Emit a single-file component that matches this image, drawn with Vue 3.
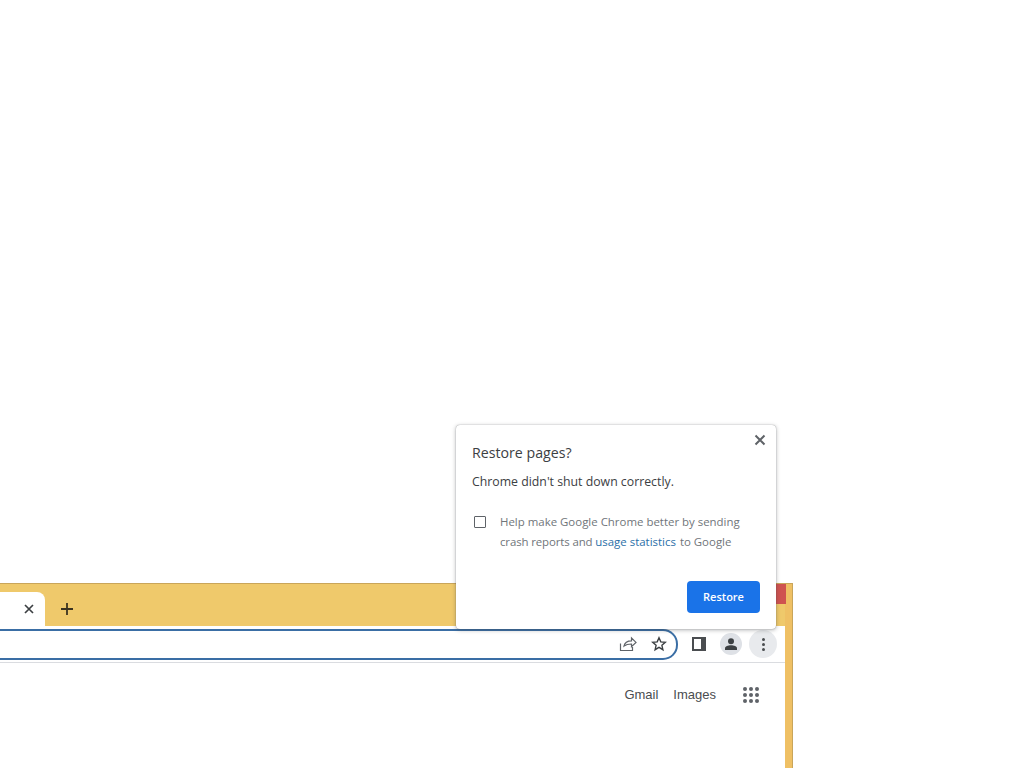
<template>
  <div class="desktop">
    <div class="window">
      <div class="tabstrip">
        <div class="tab">
          <svg class="tab-close" width="12" height="12" viewBox="0 0 12 12"><path d="M2 2l8 8M10 2l-8 8" stroke="#3c4043" stroke-width="1.7" fill="none"/></svg>
        </div>
        <svg class="new-tab" width="14" height="14" viewBox="0 0 14 14"><path d="M7 1v12M1 7h12" stroke="#3b3320" stroke-width="1.8" fill="none"/></svg>
        <div class="win-close"></div>
      </div>
      <div class="toolbar">
        <div class="omnibox">
          <svg class="share" width="18" height="16" viewBox="0 0 18 16"><path d="M1.500 7.500v7h12V11M5 10c.6-3.300 3.400-5.200 7.500-5.200V2l4.500 4.400-4.500 4.300V8C9.500 8 7 8.500 5 10z" stroke="#5f6368" stroke-width="1.200" fill="none"/></svg>
          <svg class="star" width="16" height="16" viewBox="0 0 16 16"><path d="M8 1.800l1.800 4.100 4.500.4-3.400 3 1 4.400L8 11.400l-3.900 2.300 1-4.400-3.400-3 4.500-.4z" stroke="#3c4043" stroke-width="1.400" fill="none"/></svg>
        </div>
        <div class="side-panel"><span></span></div>
        <div class="avatar">
          <svg width="14" height="14" viewBox="0 0 14 14"><circle cx="7" cy="4.200" r="3" fill="#3c4043"/><path d="M1 13v-1.800C1 9.400 4 8.300 7 8.300s6 1.100 6 2.900V13z" fill="#3c4043"/></svg>
        </div>
        <div class="menu-btn"><i></i><i></i><i></i></div>
      </div>
      <div class="page">
        <a class="link">Gmail</a>
        <a class="link images">Images</a>
        <div class="apps"><i v-for="n in 9" :key="n"></i></div>
      </div>
    </div>

    <div class="dialog">
      <svg class="dialog-close" width="12" height="12" viewBox="0 0 12 12"><path d="M1.500 1.500l9 9M10.500 1.500l-9 9" stroke="#5f6368" stroke-width="2" fill="none"/></svg>
      <div class="title">Restore pages?</div>
      <div class="message">Chrome didn't shut down correctly.</div>
      <div class="consent">
        <span class="checkbox"></span>
        <p>Help make Google Chrome better by sending<br><span class="tight">crash reports and </span><a>usage statistics</a> to Google</p>
      </div>
      <div class="actions"><button type="button">Restore</button></div>
    </div>
  </div>
</template>

<script setup>
</script>

<style>
html, body { margin: 0; background: #fff; }
</style>

<style scoped>
.desktop {
  position: relative;
  width: 1024px;
  height: 768px;
  overflow: hidden;
  background: #fff;
  font-family: "Open Sans", "Noto Sans", sans-serif;
}
.window {
  position: absolute;
  left: -10px;
  top: 583px;
  width: 803px;
  height: 185px;
  box-sizing: border-box;
  display: flex;
  flex-direction: column;
  background: #efc064;
  border: solid #c9a55a;
  border-width: 1px 1px 0 0;
  padding-right: 7px;
}
.tabstrip {
  height: 42px;
  display: flex;
  align-items: flex-end;
  position: relative;
  background: #efc96b;
}
.tab {
  width: 45px;
  height: 34px;
  background: #fff;
  border-radius: 0 8px 0 0;
  display: flex;
  align-items: center;
  justify-content: flex-end;
  padding-right: 10px;
}
.new-tab { margin: 0 0 10px 15px; }
.win-close {
  position: absolute;
  right: -1px;
  top: 0;
  width: 12px;
  height: 20px;
  background: #cf5350;
}
.toolbar {
  height: 36px;
  background: #fff;
  display: flex;
  align-items: center;
  border-bottom: 1px solid #dadce0;
}
.omnibox {
  width: 687px;
  height: 27px;
  margin-left: -1px;
  border: 2px solid #3a6ea5;
  border-left: 0;
  border-radius: 0 15px 15px 0;
  display: flex;
  align-items: center;
  justify-content: flex-end;
}
.share { margin-right: 14px; }
.star { margin-right: 9px; }
.side-panel {
  width: 14px;
  height: 14px;
  margin-left: 14px;
  box-sizing: border-box;
  border: 2px solid #4a4d50;
  display: flex;
  justify-content: flex-end;
}
.side-panel span { width: 3px; background: #4a4d50; }
.avatar {
  width: 22px;
  height: 22px;
  margin-left: 14px;
  border-radius: 50%;
  background: #dee1e6;
  display: flex;
  align-items: center;
  justify-content: center;
}
.menu-btn {
  width: 28px;
  height: 28px;
  margin-left: 7px;
  border-radius: 50%;
  background: #e8eaed;
  display: flex;
  flex-direction: column;
  align-items: center;
  justify-content: center;
  gap: 2px;
}
.menu-btn i { width: 3px; height: 3px; border-radius: 50%; background: #4a4d50; }
.page {
  flex: 1;
  background: #fff;
  display: flex;
  align-items: flex-start;
  justify-content: flex-end;
  padding: 22px 26px 0 0;
}
.link {
  font-family: "Liberation Sans", Arial, sans-serif;
  font-size: 13px;
  line-height: 20px;
  color: #4a4d50;
}
.images { margin-left: 15px; }
.apps {
  margin: 2px 0 0 27px;
  display: grid;
  grid-template-columns: repeat(3, 4px);
  grid-auto-rows: 4px;
  gap: 2px;
}
.apps i { border-radius: 50%; background: #5f6368; }
.dialog {
  position: absolute;
  left: 456px;
  top: 425px;
  width: 320px;
  height: 204px;
  box-sizing: border-box;
  background: #fff;
  border-radius: 4px;
  box-shadow: 0 0 1px rgba(60,64,67,.6), 0 1px 4px rgba(60,64,67,.4);
  padding: 17px 16px 0;
  color: #3c4043;
}
.dialog-close { position: absolute; right: 10px; top: 9px; }
.title { font-size: 14.200px; line-height: 22px; }
.message { font-size: 12.300px; line-height: 18px; margin-top: 9px; }
.consent { display: flex; margin-top: 21px; color: #70757a; }
.checkbox {
  width: 12px;
  height: 12px;
  box-sizing: border-box;
  margin: 4px 14px 0 2px;
  border: 1.500px solid #5f6368;
  border-radius: 1px;
  flex: none;
}
.consent p { margin: 0; font-size: 11.450px; line-height: 20px; }
.tight { letter-spacing: -0.12px; }
.consent a { color: #2a6fa8; margin-right: 1px; }
.actions { position: absolute; right: 16px; bottom: 16px; }
button {
  width: 73px;
  height: 32px;
  border: 0;
  border-radius: 4px;
  padding: 0 0 2px;
  background: #1a73e8;
  color: #fff;
  font: 600 11px "Open Sans", sans-serif;
}
</style>
